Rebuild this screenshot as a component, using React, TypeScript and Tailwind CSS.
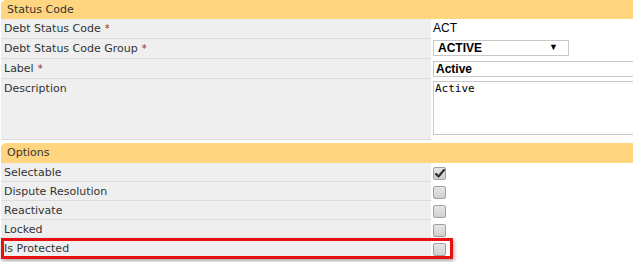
import { ReactNode } from "react";

const labelFont = { fontFamily: '"DejaVu Sans", Verdana, sans-serif' };

const SectionHeader = ({ title, height }: { title: string; height: string }) => (
  <div className={`${height} bg-[#ffd57f] rounded-tl-[5px] pl-[6px] text-[11px] leading-[20px] text-[#333]`} style={labelFont}>
    {title}
  </div>
);

const Row = ({
  label,
  required,
  height,
  children,
  highlight,
}: {
  label: string;
  required?: boolean;
  height: string;
  children?: ReactNode;
  highlight?: boolean;
}) => (
  <div className={`relative flex ${height}`}>
    <div
      className="w-[430px] shrink-0 bg-[#efefef] border-b border-[#dcdcdc] pl-[3px] pt-[3px] text-[11px] leading-[14px] text-[#333]"
      style={labelFont}
    >
      {label}
      {required && <span className="ml-[4px] text-[10px] align-top text-[#a02828]">*</span>}
    </div>
    <div className="flex-1 pl-[2px] min-w-0">{children}</div>
    {highlight && (
      <div className="absolute left-0 top-[-1px] w-[452px] h-[21px] border-[3px] border-[#e81010] shadow-[1px_2px_4px_rgba(0,0,0,0.35)] pointer-events-none" />
    )}
  </div>
);

const Checkbox = ({ checked }: { checked?: boolean }) => (
  <div className="mt-[4px] w-[13px] h-[13px] rounded-[2px] border border-[#a0a0a0] bg-gradient-to-b from-[#e6e6e6] to-[#d0d0d0] flex items-center justify-center">
    {checked && (
      <svg width="10" height="9" viewBox="0 0 10 9">
        <path d="M1 5 L3.5 7.5 L9 1" fill="none" stroke="#333" strokeWidth="2.2" strokeLinecap="round" strokeLinejoin="round" />
      </svg>
    )}
  </div>
);

export default function App() {
  return (
    <div className="w-[633px] h-[262px] bg-white overflow-hidden pl-[1px]" style={{ fontFamily: '"Liberation Sans", Arial, sans-serif' }}>
      <SectionHeader title="Status Code" height="h-[19px]" />
      <Row label="Debt Status Code" required height="h-5">
        <div className="pt-[2px] text-[12px] leading-[15px] text-black">ACT</div>
      </Row>
      <Row label="Debt Status Code Group" required height="h-5">
        <div className="mt-[1px] w-[136px] h-[16px] border border-[#c8c8c8] flex items-center justify-between pl-[4px] pr-[10px] text-[12px] font-bold text-black">
          <span>ACTIVE</span>
          <span className="text-[9px]">▼</span>
        </div>
      </Row>
      <Row label="Label" required height="h-5">
        <div className="mt-[2px] h-[16px] border border-[#c8c8c8] border-r-0 pl-[2px] text-[12px] leading-[14px] font-bold text-black">
          Active
        </div>
      </Row>
      <Row label="Description" height="h-[61px]">
        <div
          className="mt-[2px] h-[54px] border border-[#c8c8c8] border-r-0 pl-[1px] text-[11px] leading-[14px] text-black"
          style={{ fontFamily: '"DejaVu Sans Mono", "Liberation Mono", monospace' }}
        >
          Active
        </div>
      </Row>
      <div className="h-[3px]" />
      <SectionHeader title="Options" height="h-5" />
      <Row label="Selectable" height="h-[19px]">
        <Checkbox checked />
      </Row>
      <Row label="Dispute Resolution" height="h-[19px]">
        <Checkbox />
      </Row>
      <Row label="Reactivate" height="h-[19px]">
        <Checkbox />
      </Row>
      <Row label="Locked" height="h-[19px]">
        <Checkbox />
      </Row>
      <Row label="Is Protected" height="h-[19px]" highlight>
        <Checkbox />
      </Row>
    </div>
  );
}
